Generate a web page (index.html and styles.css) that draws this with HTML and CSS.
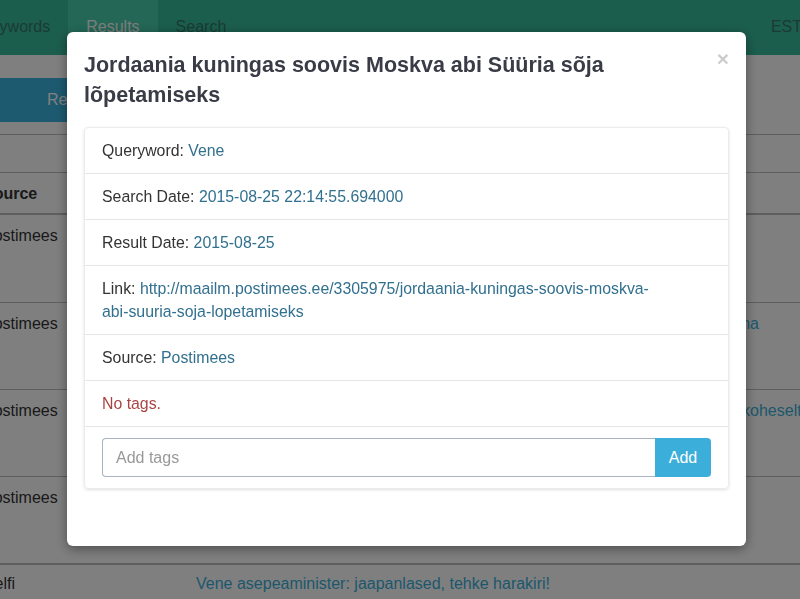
FILE: index.html
```html
<!DOCTYPE html>
<html lang="et">
<head>
<meta charset="utf-8">
<title>Results</title>
<link rel="stylesheet" href="styles.css">
</head>
<body>
<div class="page">
  <nav class="navbar">
    <ul class="nav">
      <li><a href="#">Keywords</a></li>
      <li class="active"><a href="#">Results</a></li>
      <li><a href="#">Search</a></li>
    </ul>
    <ul class="nav nav-right">
      <li><a href="#">EST</a></li>
    </ul>
  </nav>

  <div class="content">
    <div class="tabbar">
      <a class="tab active" href="#">Results</a>
    </div>

    <div class="tbl">
      <div class="tbl-row empty"></div>
      <div class="tbl-row head">
        <div class="cell">Source</div>
        <div class="cell">Title</div>
      </div>
      <div class="tbl-row first">
        <div class="cell">Postimees</div>
        <div class="cell"><a href="#" class="t-link">Jordaania kuningas soovis Moskva abi Süüria sõja lõpetamiseks</a></div>
      </div>
      <div class="tbl-row">
        <div class="cell">Postimees</div>
        <div class="cell"><a href="#" class="t-link"><span class="l1">Venemaa ja Jordaania liidrid arutavad Moskvas Lähis-Ida olukorda ning ka täna</span> õhtul Kremlis</a></div>
      </div>
      <div class="tbl-row">
        <div class="cell">Postimees</div>
        <div class="cell"><a href="#" class="t-link"><span class="l1">Vene välisminister palus läänt üles Süüria valitsusega läbirääkimisi alustama koheselt</span> ja tingimusteta</a></div>
      </div>
      <div class="tbl-row">
        <div class="cell">Postimees</div>
        <div class="cell"><a href="#" class="t-link">Moskva ja Amman leppisid kokku koostöös</a></div>
      </div>
      <div class="tbl-row sep">
        <div class="cell">Delfi</div>
        <div class="cell"><a href="#" class="t-link">Vene asepeaminister: jaapanlased, tehke harakiri!</a></div>
      </div>
    </div>
  </div>
</div>

<div class="backdrop"></div>

<div class="modal">
  <div class="modal-header">
    <button class="close" type="button">&times;</button>
    <h4 class="modal-title">Jordaania kuningas soovis Moskva abi Süüria sõja lõpetamiseks</h4>
  </div>
  <div class="modal-body">
    <ul class="list">
      <li class="item">Queryword: <span class="val">Vene</span></li>
      <li class="item">Search Date: <span class="val">2015-08-25 22:14:55.694000</span></li>
      <li class="item">Result Date: <span class="val">2015-08-25</span></li>
      <li class="item">Link: <a class="val" href="#">http://maailm.postimees.ee/3305975/jordaania-kuningas-soovis-moskva-<br>abi-suuria-soja-lopetamiseks</a></li>
      <li class="item">Source: <span class="val">Postimees</span></li>
      <li class="item danger">No tags.</li>
      <li class="item">
        <form class="input-group">
          <input class="tag-input" type="text" placeholder="Add tags">
          <button class="btn-add" type="button">Add</button>
        </form>
      </li>
    </ul>
  </div>
</div>
</body>
</html>
```

FILE: styles.css
```css
html, body {
  margin: 0;
  padding: 0;
  overflow: hidden;
  height: 100%;
}

body {
  font-family: "Liberation Sans", Arial, sans-serif;
  font-size: 16px;
  line-height: 23px;
  color: #333;
  background: #fff;
}

a {
  text-decoration: none;
}

.page {
  margin-left: -38px;
  width: 860px;
}

/* navbar */
.navbar {
  display: flex;
  height: 55px;
  background: #37bc9b;
}

.nav {
  display: flex;
  list-style: none;
  margin: 0;
  padding: 0;
}

.nav a {
  display: block;
  padding: 15px 18px 17px;
  line-height: 23px;
  color: #34766a;
}

.nav .active a {
  background: #48cfad;
  color: #fbfbfb;
}

.nav-right {
  margin-left: auto;
}

.nav-right a {
  padding-right: 20px;
}

/* content */
.content {
  padding-top: 23px;
}

.tabbar {
  display: flex;
  height: 44px;
}

.tab {
  display: block;
  width: 300px;
  padding-left: 85px;
  line-height: 44px;
  background: #3ab4e0;
  color: #fff;
}

.tbl {
  margin-top: 12px;
  margin-left: 13px;
}

.tbl-row {
  display: grid;
  grid-template-columns: 213px 1fr;
  box-sizing: border-box;
  height: 87px;
  border-top: 1px solid #bdbdbd;
}

.tbl-row.empty {
  height: 38px;
}

.tbl-row.head {
  height: 41px;
  font-weight: bold;
}

.tbl-row.first {
  border-top-width: 2px;
  height: 89px;
}

.tbl-row.sep {
  border-top-width: 2px;
}

.cell {
  padding: 9px 8px 8px;
  white-space: nowrap;
}

.tbl-row.sep .cell {
  padding-top: 7px;
}

.t-link {
  color: #3bafda;
}

.l1 {
  display: block;
}

/* modal */
.backdrop {
  position: fixed;
  inset: 0;
  background: rgba(0, 0, 0, 0.5);
}

.modal {
  position: fixed;
  top: 32px;
  left: 67px;
  width: 679px;
  background: #fff;
  border-radius: 6px;
  box-shadow: 0 3px 12px rgba(0, 0, 0, 0.4);
}

.modal-header {
  padding: 18px 17px 0;
}

.modal-header::after {
  content: "";
  display: block;
  clear: both;
}

.close {
  float: right;
  margin-top: -2px;
  padding: 0;
  border: 0;
  background: none;
  font-family: "Liberation Sans", Arial, sans-serif;
  font-size: 21px;
  font-weight: bold;
  line-height: 21px;
  color: #000;
  opacity: 0.2;
}

.modal-title {
  margin: 0;
  font-size: 21.5px;
  line-height: 30px;
  font-weight: bold;
  color: #393c46;
}

.modal-body {
  padding: 17px 17px 57px;
}

.list {
  list-style: none;
  margin: 0;
  padding: 0;
  border: 1px solid #ececec;
  border-radius: 4px;
  box-shadow: 0 1px 3px rgba(0, 0, 0, 0.12);
}

.item {
  padding: 11px 17px;
  font-size: 15.85px;
  line-height: 23px;
  border-bottom: 1px solid #e6e6e6;
}

.item:last-child {
  border-bottom: 0;
}

.val {
  color: #31708f;
}

.danger {
  color: #a94442;
}

.input-group {
  display: flex;
  margin: 0;
}

.tag-input {
  flex: 1;
  box-sizing: border-box;
  height: 39px;
  margin: 0;
  padding: 0 13px;
  border: 1px solid #aab3c2;
  border-right: 0;
  border-radius: 4px 0 0 4px;
  font-family: "Liberation Sans", Arial, sans-serif;
  font-size: 16px;
  color: #555;
  outline: none;
}

.tag-input::placeholder {
  color: #999;
}

.btn-add {
  box-sizing: border-box;
  width: 56px;
  height: 39px;
  margin: 0;
  padding: 0;
  border: 0;
  border-radius: 0 4px 4px 0;
  background: #3bafda;
  color: #fff;
  font-family: "Liberation Sans", Arial, sans-serif;
  font-size: 16px;
}
```
